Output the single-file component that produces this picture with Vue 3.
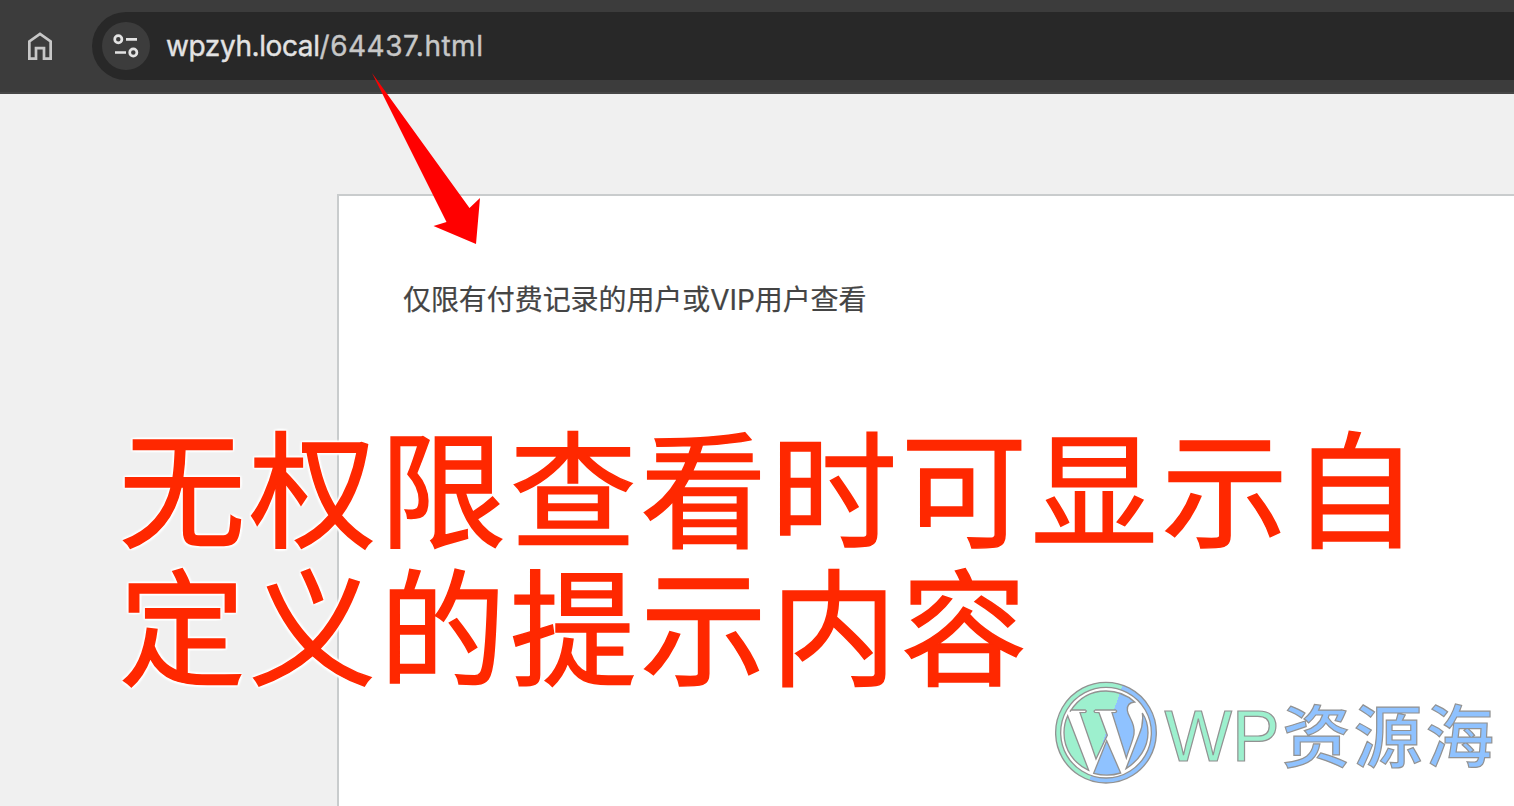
<template>
  <div class="browser">
    <header class="toolbar">
      <svg class="home" viewBox="0 0 26 30">
        <path d="M2.350 27.650V10.500L13 2.900L23.650 10.500V27.650H17V17.200H9V27.650Z" />
      </svg>
      <div class="address">
        <span class="site-info">
          <svg viewBox="0 0 26 26">
            <circle cx="5.300" cy="6.300" r="3.600" />
            <path d="M13 6.300H24M2 19.500H13" />
            <circle cx="20.300" cy="19.500" r="3.600" />
          </svg>
        </span>
        <span class="url">{{ host }}<span class="path">{{ path }}</span></span>
      </div>
    </header>

    <main class="page">
      <section class="card">
        <p class="notice">{{ notice }}</p>
      </section>
    </main>

    <svg class="arrow" viewBox="0 0 120 180">
      <path d="M2 3L99.500 138L110 128L106 174L63.500 156L76.500 152Z" />
    </svg>

    <p class="caption">
      <span v-for="line in captionLines" :key="line">{{ line }}</span>
    </p>

    <svg class="watermark" viewBox="0 0 464 126">
      <defs>
        <linearGradient id="split" gradientUnits="userSpaceOnUse" x1="120" y1="151" x2="246" y2="195">
          <stop offset="0.5" stop-color="#9df0ce" />
          <stop offset="0.5" stop-color="#8fc2ff" />
        </linearGradient>
      </defs>
      <g class="logo" transform="scale(0.33333)">
        <path
          fill-rule="evenodd"
          d="M183 22A151 151 0 1 1 182.900 22ZM183 37A136 136 0 1 0 183.100 37Z"
        />
        <path
          d="M75 110C100 70 138 48 183 48C216 48 246 60 269 81C254 82 246 91 247 106C249 127 272 142 267 177C264 197 252 222 244 249L201 113L212 112Q218 108 212 105L151 105Q144 108 150 112L162 113L187 181L153 252L105 113L121 112Q127 108 121 105L78 105Z"
        />
        <path d="M68 122L131 286C87 266 57 224 57 173C57 154 61 137 68 122Z" />
        <path d="M185 197L227 294C202 302 172 302 146 295Z" />
        <path d="M292 114C304 132 309 150 309 173C309 218 281 257 243 281L282 180C293 155 295 137 292 114Z" />
      </g>
      <text class="wp" x="119.500" y="85.500">WP</text>
      <text class="name" x="237" y="86.500">资源海</text>
    </svg>
  </div>
</template>

<script setup>
const host = "wpzyh.local";
const path = "/64437.html";
const notice = "仅限有付费记录的用户或VIP用户查看";
const captionLines = ["无权限查看时可显示自", "定义的提示内容"];
</script>

<style>
body {
  margin: 0;
  overflow: hidden;
}
</style>

<style scoped>
.browser {
  position: relative;
  display: flex;
  flex-direction: column;
  width: 1514px;
  height: 806px;
  overflow: hidden;
  background: #f0f0f0;
  font-family: Inter, "Noto Sans CJK SC", sans-serif;
}

.toolbar {
  display: flex;
  align-items: flex-start;
  flex: none;
  box-sizing: border-box;
  height: 94px;
  padding: 12px 0 0 27px;
  background: #3c3c3c;
  border-bottom: 2px solid #464646;
}

.home {
  width: 26px;
  height: 30px;
  margin-top: 19px;
  fill: none;
  stroke: #c7c7c7;
  stroke-width: 2.7;
}

.address {
  display: flex;
  align-items: center;
  flex: 1;
  height: 68px;
  margin-left: 39px;
  padding-left: 10px;
  border-radius: 34px 0 0 34px;
  background: #282828;
}

.site-info {
  display: flex;
  align-items: center;
  justify-content: center;
  width: 48px;
  height: 48px;
  border-radius: 50%;
  background: #3c3c3c;
}

.site-info svg {
  width: 26px;
  height: 26px;
  fill: none;
  stroke: #e3e3e3;
  stroke-width: 2.7;
}

.url {
  margin-left: 16px;
  color: #e3e3e3;
  font-size: 28px;
  letter-spacing: -0.4px;
  white-space: nowrap;
  -webkit-text-stroke: 0.4px;
}

.path {
  color: #c7c7c7;
  letter-spacing: 0.5px;
}

.page {
  flex: 1;
  padding: 100px 0 0 337px;
}

.card {
  box-sizing: border-box;
  height: 620px;
  padding: 84px 64px;
  border: 2px solid #c9cccd;
  border-right: 0;
  background: #fff;
}

.notice {
  margin: 0;
  color: #444;
  font-size: 28px;
  line-height: 40px;
  letter-spacing: -0.07px;
  white-space: nowrap;
  -webkit-text-stroke: 0.2px;
}

.arrow {
  position: absolute;
  left: 370px;
  top: 70px;
  width: 120px;
  height: 180px;
  fill: #f00;
}

.caption {
  position: absolute;
  left: 119px;
  top: 414px;
  display: flex;
  flex-direction: column;
  margin: 0;
  color: #ff2800;
  font-family: "Noto Sans CJK SC", sans-serif;
  font-size: 126.5px;
  line-height: 138px;
  letter-spacing: 3.8px;
  white-space: nowrap;
  -webkit-text-stroke: 1.5px #ff2800;
  text-shadow:
    2px 0 2px #fff,
    -2px 0 2px #fff,
    0 2px 2px #fff,
    0 -2px 2px #fff,
    2px 2px 2px #fff,
    -2px 2px 2px #fff,
    2px -2px 2px #fff,
    -2px -2px 2px #fff;
}

.watermark {
  position: absolute;
  left: 1045px;
  top: 675px;
  width: 464px;
  height: 126px;
}

.logo path {
  fill: url(#split);
  stroke: #929292;
  stroke-width: 4;
}

.watermark text {
  stroke: #929292;
  stroke-width: 1.2;
}

.wp {
  fill: #9df0ce;
  font-family: "Liberation Sans", sans-serif;
  font-size: 71.5px;
}

.name {
  fill: #8fc2ff;
  font-family: "Noto Sans CJK SC", sans-serif;
  font-size: 68.5px;
  font-weight: 500;
  letter-spacing: 3.2px;
}
</style>
